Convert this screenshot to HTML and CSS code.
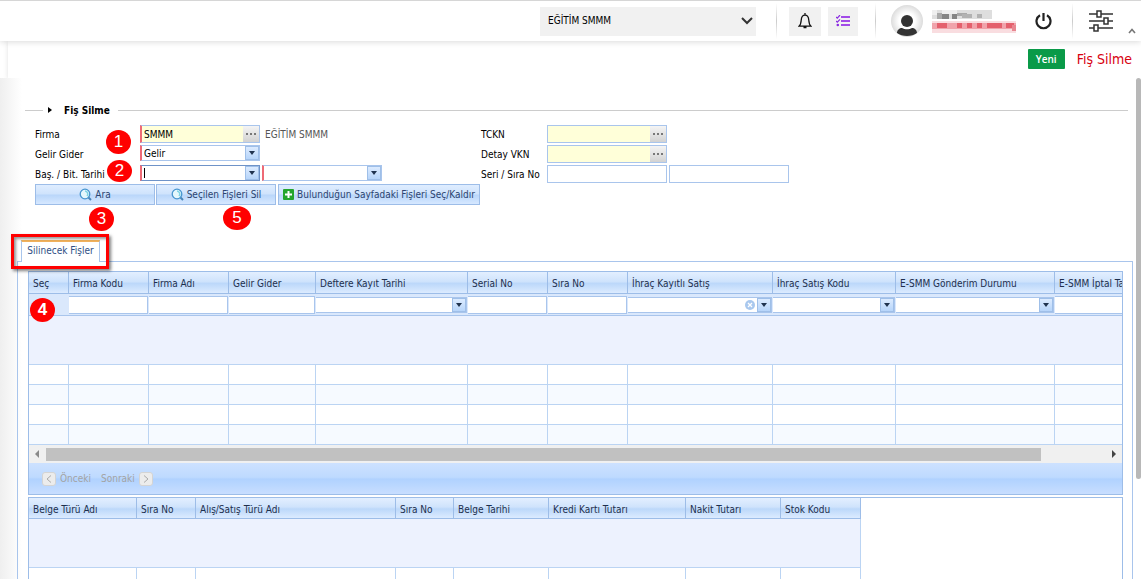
FILE: index.html
```
<!DOCTYPE html>
<html lang="tr">
<head>
    <meta charset="UTF-8">
    <meta name="viewport" content="width=device-width, initial-scale=1.0">
    <title>Fiş Silme</title>
    <link rel="stylesheet" href="styles.css">
</head>
<body>
    <header class="topbar">
        <div class="company">
            <select class="company-select" aria-label="Firma seçimi">
                <option>EĞİTİM SMMM</option>
            </select>
            <svg width="12" height="8" viewBox="0 0 12 8"><path d="M1 1l5 5 5-5" fill="none" stroke="#333" stroke-width="2"/></svg>
        </div>
        <span class="divider"></span>
        <button type="button" class="square" aria-label="Bildirimler">
            <svg width="14" height="16" viewBox="0 0 14 16"><path d="M7 0v2M1 13.200h12c-1.800-1.400-2-3-2.200-6C10.600 4 9.200 2.200 7 2.200S3.400 4 3.200 7.200C3 10.200 2.800 11.800 1 13.200zM5.500 14.500h3" fill="none" stroke="#111" stroke-width="1.300"/></svg>
        </button>
        <button type="button" class="square tasks" aria-label="Görevler">
            <svg width="14" height="12" viewBox="0 0 14 12"><path d="M5 2h9M5 6h9M5 10h9" stroke="#a24be8" stroke-width="2"/><path d="M0 2l1.300 1.200L4 0M0 6l1.300 1.200L4 4.300" fill="none" stroke="#8a2be2" stroke-width="1.200"/><circle cx="1.800" cy="10" r="1.300" fill="#8a2be2"/></svg>
        </button>
        <span class="divider"></span>
        <svg class="avatar" width="32" height="32" viewBox="0 0 32 32">
            <defs>
                <radialGradient id="face"><stop offset="0.500" stop-color="#fff"/><stop offset="1" stop-color="#dcdcdc"/></radialGradient>
                <clipPath id="round"><circle cx="16" cy="16" r="16"/></clipPath>
            </defs>
            <circle cx="16" cy="16" r="16" fill="url(#face)"/>
            <g clip-path="url(#round)" fill="#333">
                <circle cx="16" cy="16" r="6"/>
                <path d="M6 28c0-3 2.500-5 5-5 3 1.800 7 1.800 10 0 2.500 0 5 2 5 5-5 4-15 4-20 0z"/>
            </g>
        </svg>
        <svg class="user-name" width="85" height="24" viewBox="0 0 85 24" shape-rendering="crispEdges">
            <path d="M0 1h60v9H0z" fill="#dedede"/>
            <path d="M0 1h5v5H0zM10 1h15v4H10z" fill="#efefef"/>
            <path d="M5 4h5v6H5zM25 4h10v3H25z" fill="#a9a9a9"/>
            <path d="M10 5h7v5h-7zM20 5h5v5h-5z" fill="#858585"/>
            <path d="M30 5h10v4H30zM45 5h5v4h-5z" fill="#b2b2b2"/>
            <path d="M0 12h84v12H0z" fill="#f9dde0"/>
            <path d="M0 14h84v6H0z" fill="#f0a3ab"/>
            <path d="M5 14h10v5H5zM25 14h5v5h-5zM35 14h5v5h-5zM45 14h5v5h-5zM55 14h15v5H55zM74 14h8v5h-8z" fill="#e4606d"/>
            <path d="M80 16h4v6h-4z" fill="#e88690"/>
        </svg>
        <button type="button" class="plain power" aria-label="Çıkış">
            <svg width="17" height="17" viewBox="0 0 17 17"><path d="M8.500 0v8M5 2.200a7 7 0 1 0 7 0" fill="none" stroke="#222" stroke-width="2.200"/></svg>
        </button>
        <span class="divider"></span>
        <button type="button" class="plain settings" aria-label="Ayarlar">
            <svg width="24" height="22" viewBox="0 0 24 22"><g fill="none" stroke="#333" stroke-width="1.500"><path d="M0 4h8M12 4h12M0 11h15M19 11h5M0 18h5M9 18h15"/><rect x="8" y="1" width="4" height="6"/><rect x="15" y="8" width="4" height="6"/><rect x="5" y="15" width="4" height="6"/></g></svg>
        </button>
        <button type="button" class="plain collapse" aria-label="Yukarı">
            <svg width="8" height="6" viewBox="0 0 8 6"><path d="M1 5l3-3.500L7 5" fill="none" stroke="#777" stroke-width="1.600"/></svg>
        </button>
    </header>

    <div class="titlebar">
        <button type="button" class="new-btn">Yeni</button>
        <h1>Fiş Silme</h1>
    </div>

    <main class="page">
        <div class="content">
            <form class="search" onsubmit="event.preventDefault();">
                <h2 class="legend"><span class="legend-arrow"></span>Fiş Silme</h2>
                <div class="fields">
                    <label for="firma">Firma</label>
                    <div class="cell">
                        <span class="field lookup required">
                            <input type="text" id="firma" value="SMMM">
                            <button type="button" class="dots" aria-label="Firma seç"><i></i><i></i><i></i></button>
                        </span>
                        <span class="firma-name">EĞİTİM SMMM</span>
                    </div>
                    <label for="tckn">TCKN</label>
                    <div class="cell">
                        <span class="field lookup">
                            <input type="text" id="tckn">
                            <button type="button" class="dots" aria-label="TCKN seç"><i></i><i></i><i></i></button>
                        </span>
                    </div>

                    <label for="gelirGider">Gelir Gider</label>
                    <div class="cell">
                        <span class="field combo required">
                            <select id="gelirGider"><option>Gelir</option><option>Gider</option></select>
                            <span class="trigger"></span>
                        </span>
                    </div>
                    <label for="vkn">Detay VKN</label>
                    <div class="cell">
                        <span class="field lookup">
                            <input type="text" id="vkn">
                            <button type="button" class="dots" aria-label="VKN seç"><i></i><i></i><i></i></button>
                        </span>
                    </div>

                    <label for="basTarih">Baş. / Bit. Tarihi</label>
                    <div class="cell">
                        <span class="field combo required focused">
                            <span class="caret"></span>
                            <input type="text" id="basTarih">
                            <button type="button" class="trigger" aria-label="Başlangıç tarihi"></button>
                        </span>
                        <span class="field combo required">
                            <input type="text" aria-label="Bitiş tarihi">
                            <button type="button" class="trigger" aria-label="Takvim"></button>
                        </span>
                    </div>
                    <label for="seri">Seri / Sıra No</label>
                    <div class="cell">
                        <span class="field"><input type="text" id="seri"></span>
                        <span class="field"><input type="text" aria-label="Sıra No"></span>
                    </div>
                </div>
                <div class="actions">
                    <button type="submit" class="action">
                        <svg width="13" height="13" viewBox="0 0 13 13"><path d="M9 9l3 3" stroke="#4a86b8" stroke-width="2"/><circle cx="6" cy="6" r="4.800" fill="#e4f7fc" stroke="#4795cf" stroke-width="1.300"/><path d="M6 3a3 3 0 0 1 2 5" fill="none" stroke="#7fd4e4" stroke-width="1.500"/></svg>
                        Ara
                    </button>
                    <button type="button" class="action">
                        <svg width="13" height="13" viewBox="0 0 13 13"><path d="M9 9l3 3" stroke="#4a86b8" stroke-width="2"/><circle cx="6" cy="6" r="4.800" fill="#e4f7fc" stroke="#4795cf" stroke-width="1.300"/><path d="M6 3a3 3 0 0 1 2 5" fill="none" stroke="#7fd4e4" stroke-width="1.500"/></svg>
                        Seçilen Fişleri Sil
                    </button>
                    <button type="button" class="action wide">
                        <svg width="11" height="11" viewBox="0 0 11 11"><rect width="11" height="11" rx="1" fill="#24a52c"/><path d="M5.500 2v7M2 5.500h7" stroke="#fff" stroke-width="2"/></svg>
                        Bulunduğun Sayfadaki Fişleri Seç/Kaldır
                    </button>
                </div>
            </form>

            <div class="tabs">
                <button type="button" class="tab">Silinecek Fişler</button>
            </div>
            <div class="panel">
                <div class="grid">
                    <table class="vouchers">
                        <colgroup>
                            <col class="w40"><col class="w80"><col class="w80"><col class="w87"><col class="w152"><col class="w80"><col class="w80"><col class="w145"><col class="w123"><col class="w159"><col class="w152">
                        </colgroup>
                        <thead>
                            <tr>
                                <th>Seç</th>
                                <th>Firma Kodu</th>
                                <th>Firma Adı</th>
                                <th>Gelir Gider</th>
                                <th>Deftere Kayıt Tarihi</th>
                                <th>Serial No</th>
                                <th>Sıra No</th>
                                <th>İhraç Kayıtlı Satış</th>
                                <th>İhraç Satış Kodu</th>
                                <th>E-SMM Gönderim Durumu</th>
                                <th>E-SMM İptal Tarihi</th>
                            </tr>
                            <tr class="filters">
                                <td></td>
                                <td><input type="text" aria-label="Firma Kodu"></td>
                                <td><input type="text" aria-label="Firma Adı"></td>
                                <td><input type="text" aria-label="Gelir Gider"></td>
                                <td><span class="filter"><input type="text" aria-label="Deftere Kayıt Tarihi"><button type="button" class="trigger" aria-label="Takvim"></button></span></td>
                                <td><input type="text" aria-label="Serial No"></td>
                                <td><input type="text" aria-label="Sıra No"></td>
                                <td><span class="filter"><select aria-label="İhraç Kayıtlı Satış"><option></option></select><button type="button" class="clear" aria-label="Temizle"><svg width="10" height="10" viewBox="0 0 10 10"><circle cx="5" cy="5" r="5" fill="#a9c8ee"/><path d="M3 3l4 4M7 3L3 7" stroke="#fff" stroke-width="1.300"/></svg></button><span class="trigger"></span></span></td>
                                <td><span class="filter"><select aria-label="İhraç Satış Kodu"><option></option></select><span class="trigger"></span></span></td>
                                <td><span class="filter"><select aria-label="E-SMM Gönderim Durumu"><option></option></select><span class="trigger"></span></span></td>
                                <td><input type="text" aria-label="E-SMM İptal Tarihi"></td>
                            </tr>
                        </thead>
                        <tbody>
                            <tr class="empty"><td colspan="11"></td></tr>
                            <tr><td></td><td></td><td></td><td></td><td></td><td></td><td></td><td></td><td></td><td></td><td></td></tr>
                            <tr class="alt"><td></td><td></td><td></td><td></td><td></td><td></td><td></td><td></td><td></td><td></td><td></td></tr>
                            <tr><td></td><td></td><td></td><td></td><td></td><td></td><td></td><td></td><td></td><td></td><td></td></tr>
                            <tr class="alt"><td></td><td></td><td></td><td></td><td></td><td></td><td></td><td></td><td></td><td></td><td></td></tr>
                        </tbody>
                    </table>
                    <div class="hscroll">
                        <span class="arrow-left"></span>
                        <span class="track"><span class="thumb"></span></span>
                        <span class="arrow-right"></span>
                    </div>
                    <div class="pager">
                        <button type="button" disabled><span class="nav"><svg width="6" height="8" viewBox="0 0 6 8"><path d="M5 0.500L1 4l4 3.500" fill="none" stroke="#aaa"/></svg></span>Önceki</button>
                        <button type="button" disabled>Sonraki<span class="nav"><svg width="6" height="8" viewBox="0 0 6 8"><path d="M1 0.500L5 4 1 7.500" fill="none" stroke="#aaa"/></svg></span></button>
                    </div>
                </div>

                <div class="grid details">
                    <table class="lines">
                        <colgroup>
                            <col class="w108"><col class="w59"><col class="w200"><col class="w58"><col class="w95"><col class="w137"><col class="w95"><col class="w80">
                        </colgroup>
                        <thead>
                            <tr>
                                <th>Belge Türü Adı</th>
                                <th>Sıra No</th>
                                <th>Alış/Satış Türü Adı</th>
                                <th>Sıra No</th>
                                <th>Belge Tarihi</th>
                                <th>Kredi Kartı Tutarı</th>
                                <th>Nakit Tutarı</th>
                                <th>Stok Kodu</th>
                            </tr>
                        </thead>
                        <tbody>
                            <tr class="empty"><td colspan="8"></td></tr>
                            <tr><td></td><td></td><td></td><td></td><td></td><td></td><td></td><td></td></tr>
                        </tbody>
                    </table>
                </div>
            </div>
        </div>
        <div class="vscroll"></div>

        <!-- adım işaretleri -->
        <span class="step step-1">1</span>
        <span class="step step-2">2</span>
        <span class="step step-3">3</span>
        <span class="step step-4">4</span>
        <span class="step step-5">5</span>
        <span class="highlight"></span>
    </main>
</body>
</html>
```
FILE: styles.css
```
* {
    box-sizing: border-box;
}

body {
    margin: 0;
    height: 100vh;
    display: flex;
    flex-direction: column;
    overflow: hidden;
    background: #fff;
    color: #000;
    font-family: Tahoma, "DejaVu Sans Condensed", "Noto Sans", sans-serif;
    font-size: 10px;
}

button,
input,
select {
    font: inherit;
    color: inherit;
    margin: 0;
    padding: 0;
    border: 0;
    border-radius: 0;
    background: none;
    outline: none;
}

select {
    appearance: none;
}

svg {
    display: block;
    flex: none;
}

/* üst menü */
.topbar {
    position: relative;
    flex: none;
    height: 41px;
    display: flex;
    align-items: center;
    justify-content: flex-end;
    padding-right: 5px;
    border-top: 1px solid #d6d6d6;
    box-shadow: 0 1px 6px rgba(0, 0, 0, 0.15);
    background: #fff;
    z-index: 1;
}

.company {
    display: flex;
    align-items: center;
    width: 216px;
    height: 29px;
    padding: 0 3px 0 8px;
    margin-right: 20px;
    background: #f1f1f1;
}

.company-select {
    flex: 1;
    height: 29px;
    line-height: 20px;
}

.divider {
    width: 1px;
    height: 36px;
    background: linear-gradient(#fff, #ccc, #fff);
}

.square {
    display: flex;
    align-items: center;
    justify-content: center;
    width: 32px;
    height: 29px;
    margin-left: 12px;
    background: #f1f1f1;
}

.tasks {
    width: 30px;
    margin: 0 17px 0 7px;
}

.avatar {
    margin: 0 9px 0 15px;
}

.power {
    margin: 0 20px 0 18px;
}

.settings {
    margin: 0 15px 0 16px;
}

.collapse {
    margin-top: 20px;
}

.titlebar {
    flex: none;
    height: 37px;
    display: flex;
    align-items: center;
    justify-content: flex-end;
    gap: 12px;
    margin-left: 8px;
    padding: 0 9px 2px 0;
    box-shadow: 0 1px 5px rgba(0, 0, 0, 0.12);
}

.titlebar h1 {
    margin: 0;
    color: #d8000f;
    font-size: 14px;
    font-weight: normal;
}

.new-btn {
    width: 37px;
    height: 20px;
    border-radius: 1px;
    background: #0a9a48;
    color: #fff;
    font-family: "Open Sans", sans-serif;
    font-size: 10px;
    font-weight: 600;
}

.page {
    position: relative;
    flex: 1;
    min-height: 0;
    display: flex;
    overflow: hidden;
    background: linear-gradient(to right, #efefef, #fff 22px);
}

.content {
    flex: 1;
    min-width: 0;
    padding: 25px 3px 0 17px;
}

.vscroll {
    width: 5px;
    height: 401px;
    border-radius: 3px;
    background: #b8b8b8;
}

/* arama formu */
.search {
    padding: 0 5px 0 8px;
}

.legend {
    display: flex;
    align-items: center;
    gap: 8px;
    height: 14px;
    margin: 0 0 8px;
    font-size: 10px;
}

.legend::before,
.legend::after {
    content: "";
    width: 18px;
    height: 1px;
    background: #ccc;
}

.legend::after {
    flex: 1;
}

.legend-arrow {
    margin: 0 4px 0 -3px;
    border: 3px solid transparent;
    border-left: 4px solid #000;
    border-right: 0;
}

.fields {
    display: grid;
    grid-template-columns: 105px 341px 66px 1fr;
    grid-auto-rows: 18px;
    row-gap: 2px;
    padding-left: 10px;
}

.fields label {
    line-height: 19px;
}

.cell {
    display: flex;
    align-items: flex-start;
    gap: 2px;
}

.field {
    display: flex;
    width: 120px;
    height: 18px;
    border: 1px solid #a9c5ec;
    background: #fff;
}

.field input,
.field select {
    flex: 1;
    min-width: 0;
    padding: 0 2px;
}

.combo {
    height: 16px;
}

.lookup {
    background: #ffffd9;
}

.required {
    border-left: 2px solid #ee6a75;
}

.focused {
    border-color: #6f93c8;
    border-left-color: #ee6a75;
}

.caret {
    width: 1px;
    margin: 2px 0 2px 2px;
    background: #000;
}

.dots {
    display: flex;
    align-items: center;
    justify-content: center;
    gap: 2px;
    width: 16px;
    background: linear-gradient(#f4f4f4, #d2d2d2);
}

.dots i {
    width: 2px;
    height: 2px;
    background: #777;
}

.trigger {
    flex: none;
    display: flex;
    align-items: center;
    justify-content: center;
    width: 14px;
    border: 1px solid #9fbfe8;
    background: linear-gradient(#dcebff, #b7d5fa);
}

.trigger::before {
    content: "";
    border: 3px solid transparent;
    border-top: 4px solid #20334f;
    border-bottom: 0;
}

.firma-name {
    padding-left: 3px;
    line-height: 19px;
    color: #555;
}

.actions {
    display: flex;
    gap: 1px;
    margin-top: 1px;
    padding-left: 10px;
}

.action {
    display: flex;
    align-items: center;
    justify-content: center;
    gap: 3px;
    width: 120px;
    height: 21px;
    border: 1px solid #9dbde8;
    background: linear-gradient(#dfedff, #cfe3fc 48%, #b9d6fa 52%, #d6e8ff);
    color: #2c4470;
}

.wide {
    width: 202px;
    margin-left: 1px;
}

/* sekme ve tablolar */
.tabs {
    display: flex;
    margin-top: 35px;
    padding-left: 4px;
}

.tab {
    position: relative;
    width: 79px;
    height: 22px;
    margin-bottom: -1px;
    padding-bottom: 4px;
    border: 1px solid #a9c5ec;
    border-top: 2px solid #f4b45e;
    border-bottom: 0;
    background: #fff;
    color: #2f4f86;
}

.panel {
    height: 400px;
    padding: 9px;
    padding-left: 10px;
    border: 1px solid #a9c5ec;
}

.grid {
    border: 1px solid #9dbde8;
    overflow: hidden;
}

.details {
    min-height: 200px;
    margin-top: 2px;
}

table {
    table-layout: fixed;
    border-collapse: separate;
    border-spacing: 0;
}

.vouchers {
    width: 1178px;
}

.lines {
    width: 832px;
}

.w40 { width: 40px; }
.w58 { width: 58px; }
.w59 { width: 59px; }
.w80 { width: 80px; }
.w87 { width: 87px; }
.w95 { width: 95px; }
.w108 { width: 108px; }
.w123 { width: 123px; }
.w137 { width: 137px; }
.w145 { width: 145px; }
.w152 { width: 152px; }
.w159 { width: 159px; }
.w200 { width: 200px; }

th {
    height: 22px;
    padding: 2px 4px 0;
    border-right: 1px solid #9dbde8;
    border-bottom: 1px solid #9dbde8;
    background: linear-gradient(#e3efff, #cfe3fc 45%, #bcd8fa 55%, #dcebff);
    color: #1d2f4d;
    font-weight: normal;
    text-align: left;
    white-space: nowrap;
}

.details th {
    height: 21px;
}

td {
    height: 20px;
    padding: 0;
    border-right: 1px solid #bbd4f3;
    border-bottom: 1px solid #bbd4f3;
}

.alt td {
    background: #f6faff;
}

.empty td {
    height: 49px;
    background: #edf2fe;
}

.filters td {
    height: 22px;
    padding-right: 1px;
    border-right: 0;
    border-bottom-color: #a9c5ec;
    background: #dae8fc;
}

.filters td > input,
.filter {
    display: flex;
    width: 100%;
    height: 18px;
    border: 1px solid #a9c5ec;
    border-left: 0;
    background: #fff;
}

.filter {
    height: 16px;
}

.filter input,
.filter select {
    flex: 1;
    min-width: 0;
}

.clear {
    display: flex;
    align-items: center;
    padding-right: 2px;
}

.hscroll {
    display: flex;
    align-items: center;
    height: 18px;
    padding: 0 6px;
    gap: 7px;
    background: #f0f0f0;
}

.arrow-left,
.arrow-right {
    border: 4px solid transparent;
    border-right-color: #8a8a8a;
    border-left: 0;
}

.arrow-right {
    border-left: 4px solid #444;
    border-right: 0;
}

.track {
    flex: 1;
}

.thumb {
    display: block;
    width: 94%;
    height: 13px;
    background: #c1c1c1;
}

.pager {
    display: flex;
    gap: 10px;
    height: 31px;
    padding: 0 13px;
    background: linear-gradient(#cde1ff, #bedaff 46%, #b0d2ff 52%, #c8deff);
}

.pager button {
    display: flex;
    align-items: center;
    gap: 4px;
    color: #a3a3a3;
}

.nav {
    display: flex;
    align-items: center;
    justify-content: center;
    width: 14px;
    height: 14px;
    border: 1px solid #d4d4d4;
    border-radius: 3px;
    background: #ececec;
}

/* ekran üstündeki numaralar */
.step {
    position: absolute;
    display: flex;
    align-items: center;
    justify-content: center;
    width: 25px;
    height: 24px;
    border-radius: 50%;
    background: #f00;
    color: #fff;
    font-family: "Liberation Sans", Arial, sans-serif;
    font-size: 17px;
}

.step-1 { left: 106px; top: 52px; }
.step-2 { left: 107px; top: 82px; height: 22px; }
.step-3 { left: 89px; top: 129px; }
.step-4 { left: 30px; top: 220px; font-weight: bold; }
.step-5 { left: 223px; top: 128px; width: 28px; }

.highlight {
    position: absolute;
    left: 11px;
    top: 156px;
    width: 98px;
    height: 35px;
    border: 3px solid #f00;
    box-shadow: 2px 2px 3px rgba(0, 0, 0, 0.5), inset 2px 2px 3px rgba(0, 0, 0, 0.4);
    pointer-events: none;
}
```
